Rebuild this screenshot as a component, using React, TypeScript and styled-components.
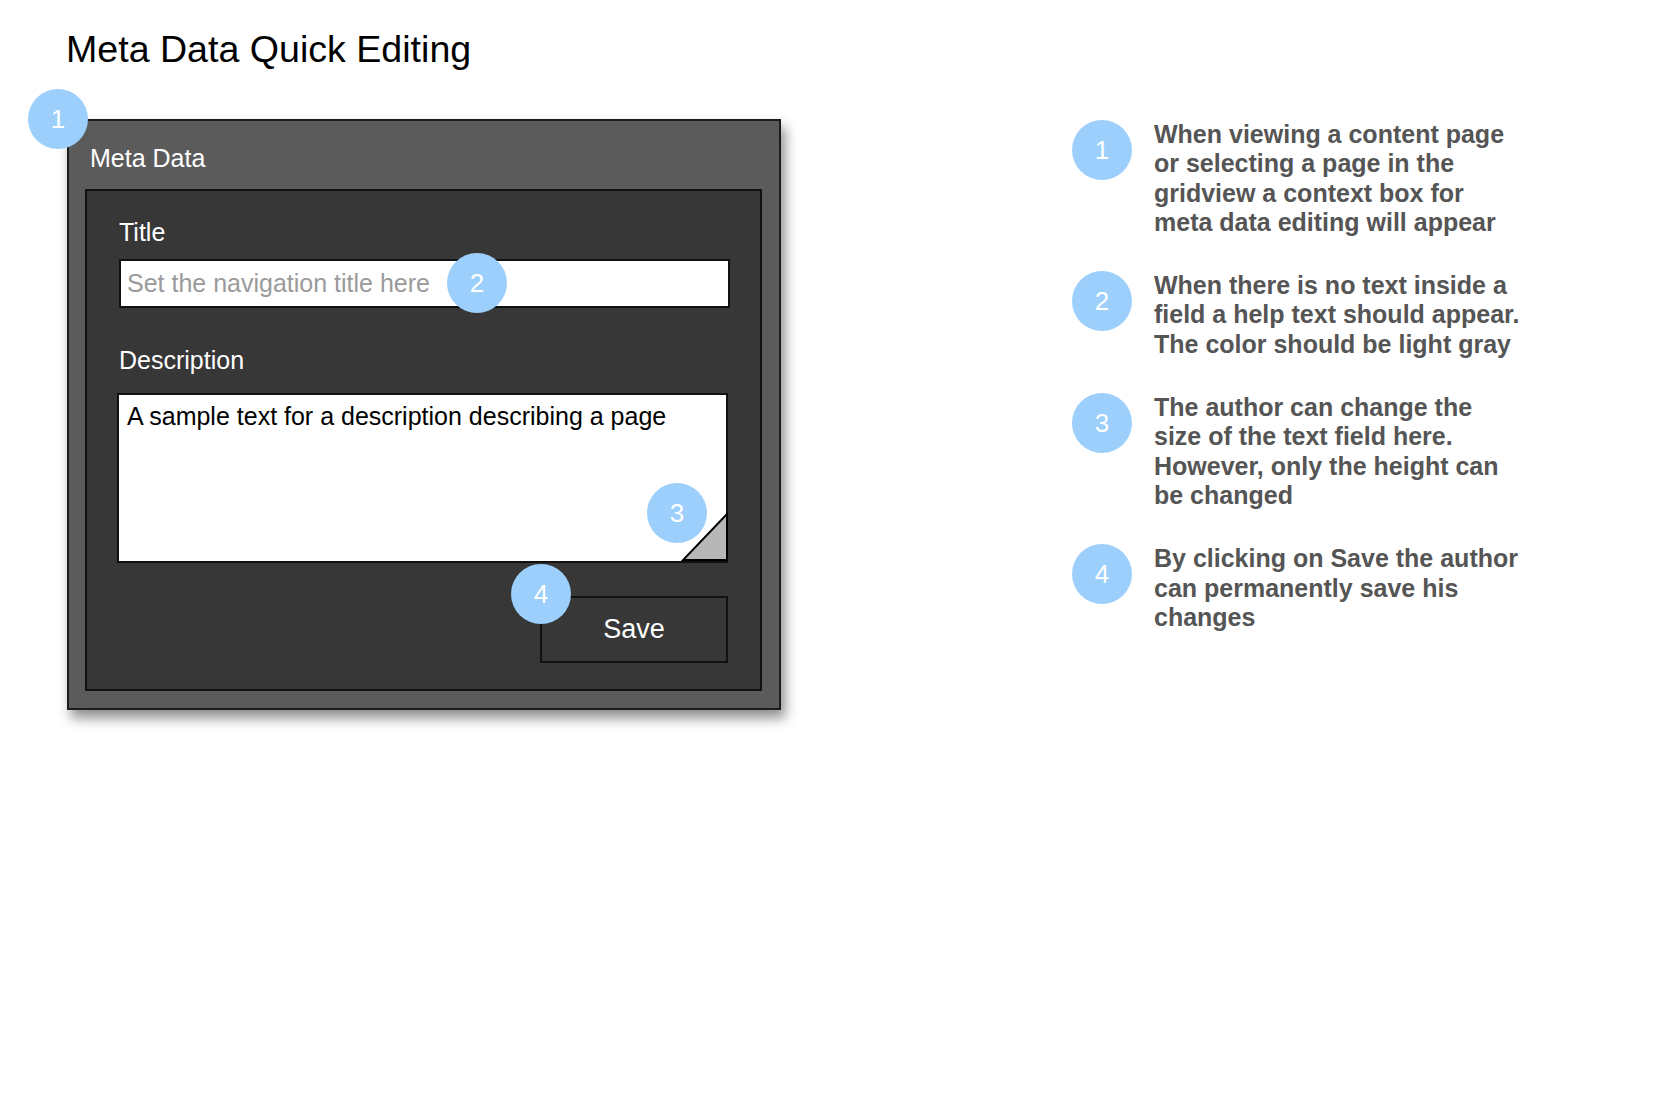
import React from 'react'
import styled, { createGlobalStyle } from 'styled-components'

const notes = [
    {
        id: 1,
        lines: [
            'When viewing a content page',
            'or selecting a page in the',
            'gridview a context box for',
            'meta data editing will appear',
        ],
    },
    {
        id: 2,
        lines: [
            'When there is no text inside a',
            'field a help text should appear.',
            'The color should be light gray',
        ],
    },
    {
        id: 3,
        lines: [
            'The author can change the',
            'size of the text field here.',
            'However, only the height can',
            'be changed',
        ],
    },
    {
        id: 4,
        lines: [
            'By clicking on Save the author',
            'can permanently save his',
            'changes',
        ],
    },
]

const App = () => {
    return (
        <>
            <GlobalStyle />
            <Page>
                <Mockup>
                    <Heading>{'Meta Data Quick Editing'}</Heading>
                    <Box>
                        <OverlayBadge $left={-41} $top={-32}>
                            1
                        </OverlayBadge>
                        <BoxHeader>{'Meta Data'}</BoxHeader>
                        <Panel>
                            <Label>{'Title'}</Label>
                            <Field $gap={12}>
                                <TitleInput placeholder="Set the navigation title here" />
                                <OverlayBadge $left={328} $top={-6}>
                                    2
                                </OverlayBadge>
                            </Field>
                            <Label $gap={37}>{'Description'}</Label>
                            <Field $gap={18} $shift={-2}>
                                <DescriptionArea
                                    defaultValue="A sample text for a description describing a page"
                                    spellCheck={false}
                                />
                                <OverlayBadge $left={530} $top={90}>
                                    3
                                </OverlayBadge>
                                <ResizeGrip width="48" height="50" viewBox="0 0 48 50">
                                    <polygon
                                        points="2,48 46,48 46,2"
                                        fill="#b7b7b7"
                                        stroke="#000"
                                        strokeWidth="2"
                                        strokeLinejoin="miter"
                                    />
                                </ResizeGrip>
                            </Field>
                            <Actions>
                                <OverlayBadge $left={392} $top={-32}>
                                    4
                                </OverlayBadge>
                                <SaveButton type="button">{'Save'}</SaveButton>
                            </Actions>
                        </Panel>
                    </Box>
                </Mockup>
                <Notes>
                    {notes.map((note) => (
                        <Note key={note.id}>
                            <Badge>{note.id}</Badge>
                            <NoteText>
                                {note.lines.map((line) => (
                                    <NoteLine key={line}>{line}</NoteLine>
                                ))}
                            </NoteText>
                        </Note>
                    ))}
                </Notes>
            </Page>
        </>
    )
}

export default App

const GlobalStyle = createGlobalStyle`
    html, body {
        margin: 0;
        padding: 0;
        background: #ffffff;
    }
    body {
        font-family: 'Liberation Sans', Arial, Helvetica, sans-serif;
    }
    * {
        box-sizing: border-box;
    }
`

const Page = styled.div`
    display: flex;
    align-items: flex-start;
    min-height: 1117px;
    padding: 28px 0 0 66px;
`

const Mockup = styled.div`
    display: flex;
    flex-direction: column;
    width: 715px;
`

const Heading = styled.h1`
    margin: 0;
    font-size: 37.6px;
    line-height: 42px;
    font-weight: 400;
    color: #000;
`

const Box = styled.div`
    position: relative;
    margin: 49px 0 0 1px;
    width: 714px;
    padding: 0 17px 17px 16px;
    background: #5b5b5b;
    border: 2px solid #1c1c1c;
    box-shadow: 4px 8px 12px rgba(0, 0, 0, 0.45);
`

const BoxHeader = styled.div`
    height: 68px;
    padding: 22px 0 0 5px;
    font-size: 25px;
    line-height: 30px;
    color: #fff;
`

const Panel = styled.div`
    display: flex;
    flex-direction: column;
    padding: 26px 30px 26px 32px;
    background: #373737;
    border: 2px solid #111;
`

const Label = styled.div<{ $gap?: number }>`
    margin-top: ${(props) => props.$gap || 0}px;
    font-size: 25px;
    line-height: 30px;
    color: #fff;
`

const Field = styled.div<{ $gap: number; $shift?: number }>`
    position: relative;
    margin-top: ${(props) => props.$gap}px;
    margin-left: ${(props) => props.$shift || 0}px;
`

const TitleInput = styled.input`
    display: block;
    width: 611px;
    height: 49px;
    margin: 0;
    padding: 0 6px;
    border: 2px solid #111;
    border-radius: 0;
    background: #fff;
    font-family: inherit;
    font-size: 25px;
    color: #000;
    outline: none;
    &::placeholder {
        color: #9a9a9a;
        opacity: 1;
    }
`

const DescriptionArea = styled.textarea`
    display: block;
    width: 611px;
    height: 170px;
    margin: 0;
    padding: 6px 8px;
    border: 2px solid #111;
    border-radius: 0;
    background: #fff;
    font-family: inherit;
    font-size: 25px;
    line-height: 30px;
    color: #000;
    resize: none;
    outline: none;
    overflow: hidden;
`

const ResizeGrip = styled.svg`
    position: absolute;
    right: 1px;
    bottom: 1px;
    display: block;
`

const Actions = styled.div`
    position: relative;
    display: flex;
    justify-content: flex-end;
    margin-top: 33px;
    padding-right: 2px;
`

const SaveButton = styled.button`
    width: 188px;
    height: 67px;
    margin: 0;
    padding: 0;
    border: 2px solid #111;
    border-radius: 0;
    background: #373737;
    font-family: inherit;
    font-size: 27px;
    color: #fff;
    cursor: pointer;
`

const Badge = styled.div`
    flex: none;
    display: flex;
    align-items: center;
    justify-content: center;
    width: 60px;
    height: 60px;
    border-radius: 50%;
    background: #9ccffc;
    font-size: 26px;
    line-height: 1;
    color: #fff;
`

const OverlayBadge = styled(Badge)<{ $left: number; $top: number }>`
    position: absolute;
    left: ${(props) => props.$left}px;
    top: ${(props) => props.$top}px;
    z-index: 2;
`

const Notes = styled.div`
    display: flex;
    flex-direction: column;
    gap: 34px;
    margin: 92px 0 0 291px;
`

const Note = styled.div`
    display: flex;
    align-items: flex-start;
    gap: 22px;
`

const NoteText = styled.div`
    display: flex;
    flex-direction: column;
`

const NoteLine = styled.div`
    font-size: 25px;
    line-height: 29.3px;
    font-weight: 700;
    color: #555;
    white-space: nowrap;
`
